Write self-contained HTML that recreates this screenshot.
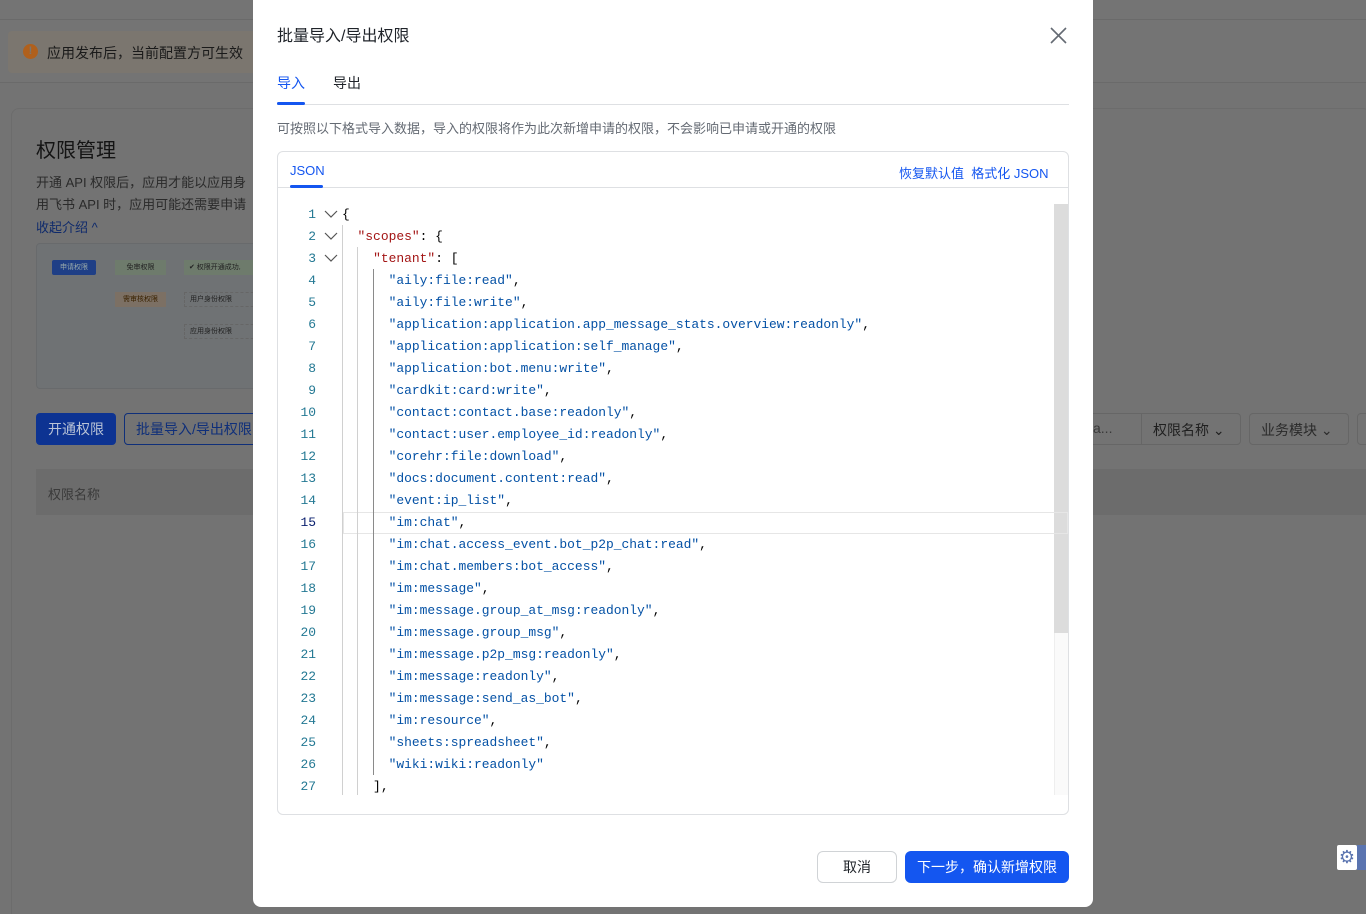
<!DOCTYPE html>
<html style="overflow:hidden"><head><meta charset="utf-8"><style>
*{box-sizing:border-box;margin:0;padding:0}
body{width:1366px;height:914px;overflow:hidden;background:#737373;font-family:"Liberation Sans","Noto Sans CJK SC",sans-serif;position:relative}
.a{position:absolute}
.cjk{font-family:"Liberation Sans","Noto Sans CJK SC",sans-serif}
.code{font-family:"Liberation Mono","DejaVu Sans Mono",monospace;font-size:12.95px;line-height:22px}
.code>div{display:flex;height:22px}
.code>div>div:last-child{white-space:pre;padding-left:26px}
.ln{width:40px;text-align:right;color:#237893}
.k{color:#a31515}.v{color:#0451a5}
</style></head><body>
<div class="a" style="left:0;top:0;width:1366px;height:20px;background:#747474;border-bottom:1px solid #6a6a6a"></div>
<div class="a" style="left:0;top:20px;width:1366px;height:63px;background:#747474;border-bottom:1px solid #6a6a6a"></div>
<div class="a" style="left:8px;top:31px;width:250px;height:42px;background:#7b766f;border-radius:4px"></div>
<div class="a" style="left:23px;top:44px;width:15px;height:15px;border-radius:50%;background:#b0601c;color:#7b766f;font-size:11px;font-weight:bold;text-align:center;line-height:15px">!</div>
<div class="a cjk" style="left:47px;top:43px;font-size:14px;color:#1a1a1a">应用发布后，当前配置方可生效</div>
<div class="a" style="left:11px;top:108px;width:1360px;height:820px;background:#737373;border:1px solid #6c6c6c;border-radius:8px"></div>
<div class="a cjk" style="left:36px;top:134px;font-size:20px;color:#141414">权限管理</div>
<div class="a cjk" style="left:36px;top:172px;font-size:13px;color:#2a2a2a;line-height:22px">开通 API 权限后，应用才能以应用身<br>用飞书 API 时，应用可能还需要申请</div>
<div class="a cjk" style="left:36px;top:217px;font-size:13px;color:#0f2a6b">收起介绍 ^</div>
<div class="a" style="left:36px;top:243px;width:230px;height:146px;background:#6f7274;border:1px solid #686a6c;border-radius:4px"></div>
<div class="a cjk" style="left:52px;top:260px;width:44px;height:15px;background:#1f3f86;border-radius:2px;font-size:7px;color:#9aa;text-align:center;line-height:15px">申请权限</div>
<div class="a cjk" style="left:115px;top:260px;width:51px;height:15px;background:#6e7b6c;font-size:7px;color:#222;text-align:center;line-height:15px">免审权限</div>
<div class="a cjk" style="left:184px;top:260px;width:80px;height:15px;background:#6e7b6c;font-size:7px;color:#222;line-height:15px;padding-left:5px">✔ 权限开通成功,</div>
<div class="a cjk" style="left:115px;top:292px;width:51px;height:15px;background:#7c7064;font-size:7px;color:#3a2200;text-align:center;line-height:15px">需审核权限</div>
<div class="a cjk" style="left:184px;top:292px;width:80px;height:15px;border:1px dashed #666;font-size:7px;color:#222;line-height:13px;padding-left:5px">用户身份权限</div>
<div class="a cjk" style="left:184px;top:324px;width:80px;height:15px;border:1px dashed #666;font-size:7px;color:#222;line-height:13px;padding-left:5px">应用身份权限</div>
<div class="a cjk" style="left:36px;top:413px;width:80px;height:32px;background:#0d3392;border-radius:4px;color:#b9c3d6;font-size:14px;text-align:center;line-height:32px">开通权限</div>
<div class="a cjk" style="left:124px;top:413px;width:140px;height:32px;border:1px solid #0f2f7a;border-radius:4px;color:#0f2f7a;font-size:14px;line-height:30px;padding-left:11px">批量导入/导出权限</div>
<div class="a" style="left:36px;top:469px;width:1330px;height:46px;background:#6c6c6c"></div>
<div class="a cjk" style="left:48px;top:484px;font-size:13px;color:#3a3a3a">权限名称</div>
<div class="a" style="left:1080px;top:413px;width:161px;height:32px;border:1px solid #666;border-radius:4px"></div>
<div class="a" style="left:1141px;top:413px;width:1px;height:32px;background:#666"></div>
<div class="a" style="left:1093px;top:420px;font-size:14px;color:#3a3a3a">a...</div>
<div class="a cjk" style="left:1153px;top:420px;font-size:14px;color:#1f1f1f">权限名称 ⌄</div>
<div class="a" style="left:1249px;top:413px;width:100px;height:32px;border:1px solid #666;border-radius:4px"></div>
<div class="a cjk" style="left:1261px;top:420px;font-size:14px;color:#2a2a2a">业务模块 ⌄</div>
<div class="a" style="left:1357px;top:413px;width:20px;height:32px;border:1px solid #666;border-radius:4px"></div>
<div class="a" style="left:1337px;top:845px;width:20px;height:25px;background:#fff;border-radius:2px;color:#5a74b0;font-size:18px;text-align:center;line-height:25px">⚙</div>
<div class="a" style="left:1357px;top:845px;width:9px;height:25px;background:#5a74b0"></div>

<div class="a" style="left:253px;top:-8px;width:840px;height:915px;background:#fff;border-radius:8px"></div>
<div class="a cjk" style="left:277px;top:22px;font-size:16px;color:#1f2329">批量导入/导出权限</div>
<svg class="a" style="left:1050px;top:27px" width="17" height="17" viewBox="0 0 17 17"><path d="M1 1L16 16M16 1L1 16" stroke="#646a73" stroke-width="1.6"/></svg>
<div class="a cjk" style="left:277px;top:73px;font-size:14px;color:#1456f0">导入</div>
<div class="a cjk" style="left:333px;top:73px;font-size:14px;color:#1f2329">导出</div>
<div class="a" style="left:277px;top:104px;width:792px;height:1px;background:#dee0e3"></div>
<div class="a" style="left:277px;top:102px;width:28px;height:3px;background:#1456f0;border-radius:2px"></div>
<div class="a cjk" style="left:277px;top:118px;font-size:13px;color:#646a73">可按照以下格式导入数据，导入的权限将作为此次新增申请的权限，不会影响已申请或开通的权限</div>
<div class="a" style="left:277px;top:151px;width:792px;height:664px;border:1px solid #dee0e3;border-radius:6px"></div>
<div class="a" style="left:278px;top:187px;width:790px;height:1px;background:#dee0e3"></div>
<div class="a" style="left:290px;top:163px;font-size:13px;color:#1456f0">JSON</div>
<div class="a" style="left:290px;top:185px;width:33px;height:3px;background:#1456f0;border-radius:2px"></div>
<div class="a cjk" style="left:899px;top:163px;font-size:13px;color:#1456f0">恢复默认值&nbsp;&nbsp;格式化 JSON</div>
<div class="a" style="left:1054px;top:204px;width:14px;height:591px;background:#fafafa;border-left:1px solid #eee"></div>
<div class="a" style="left:1054px;top:204px;width:14px;height:429px;background:#dcdcdc"></div>
<div class="a" style="left:343px;top:512px;width:725px;height:22px;border:1px solid #e6e6e6"></div>
<div class="a" style="left:342px;top:225px;width:1px;height:570px;background:#d0d0d0"></div>
<div class="a" style="left:357px;top:247px;width:1px;height:548px;background:#d0d0d0"></div>
<div class="a" style="left:373px;top:269px;width:1px;height:506px;background:#8a8a8a"></div>
<svg class="a" style="left:324px;top:209px" width="14" height="80" viewBox="0 0 14 80"><g fill="none" stroke="#555" stroke-width="1.2"><path d="M1 2l6 6 6-6"/><path d="M1 24l6 6 6-6"/><path d="M1 46l6 6 6-6"/></g></svg>
<div class="a code" style="left:276px;top:204px">
<div><div class="ln">1</div><div>{</div></div>
<div><div class="ln">2</div><div>  <span class="k">"scopes"</span>: {</div></div>
<div><div class="ln">3</div><div>    <span class="k">"tenant"</span>: [</div></div>
<div><div class="ln">4</div><div>      <span class="v">"aily:file:read"</span>,</div></div>
<div><div class="ln">5</div><div>      <span class="v">"aily:file:write"</span>,</div></div>
<div><div class="ln">6</div><div>      <span class="v">"application:application.app_message_stats.overview:readonly"</span>,</div></div>
<div><div class="ln">7</div><div>      <span class="v">"application:application:self_manage"</span>,</div></div>
<div><div class="ln">8</div><div>      <span class="v">"application:bot.menu:write"</span>,</div></div>
<div><div class="ln">9</div><div>      <span class="v">"cardkit:card:write"</span>,</div></div>
<div><div class="ln">10</div><div>      <span class="v">"contact:contact.base:readonly"</span>,</div></div>
<div><div class="ln">11</div><div>      <span class="v">"contact:user.employee_id:readonly"</span>,</div></div>
<div><div class="ln">12</div><div>      <span class="v">"corehr:file:download"</span>,</div></div>
<div><div class="ln">13</div><div>      <span class="v">"docs:document.content:read"</span>,</div></div>
<div><div class="ln">14</div><div>      <span class="v">"event:ip_list"</span>,</div></div>
<div><div class="ln" style="color:#0b216f">15</div><div>      <span class="v">"im:chat"</span>,</div></div>
<div><div class="ln">16</div><div>      <span class="v">"im:chat.access_event.bot_p2p_chat:read"</span>,</div></div>
<div><div class="ln">17</div><div>      <span class="v">"im:chat.members:bot_access"</span>,</div></div>
<div><div class="ln">18</div><div>      <span class="v">"im:message"</span>,</div></div>
<div><div class="ln">19</div><div>      <span class="v">"im:message.group_at_msg:readonly"</span>,</div></div>
<div><div class="ln">20</div><div>      <span class="v">"im:message.group_msg"</span>,</div></div>
<div><div class="ln">21</div><div>      <span class="v">"im:message.p2p_msg:readonly"</span>,</div></div>
<div><div class="ln">22</div><div>      <span class="v">"im:message:readonly"</span>,</div></div>
<div><div class="ln">23</div><div>      <span class="v">"im:message:send_as_bot"</span>,</div></div>
<div><div class="ln">24</div><div>      <span class="v">"im:resource"</span>,</div></div>
<div><div class="ln">25</div><div>      <span class="v">"sheets:spreadsheet"</span>,</div></div>
<div><div class="ln">26</div><div>      <span class="v">"wiki:wiki:readonly"</span></div></div>
<div><div class="ln">27</div><div>    ],</div></div>
</div>
<div class="a" style="left:278px;top:797px;width:790px;height:17px;background:#fff;border-radius:0 0 6px 6px"></div>
<div class="a cjk" style="left:817px;top:851px;width:80px;height:32px;border:1px solid #d0d3d6;border-radius:6px;font-size:14px;color:#1f2329;text-align:center;line-height:30px">取消</div>
<div class="a cjk" style="left:905px;top:851px;width:164px;height:32px;background:#1456f0;border-radius:6px;font-size:14px;color:#fff;text-align:center;line-height:32px">下一步，确认新增权限</div>
</body></html>
